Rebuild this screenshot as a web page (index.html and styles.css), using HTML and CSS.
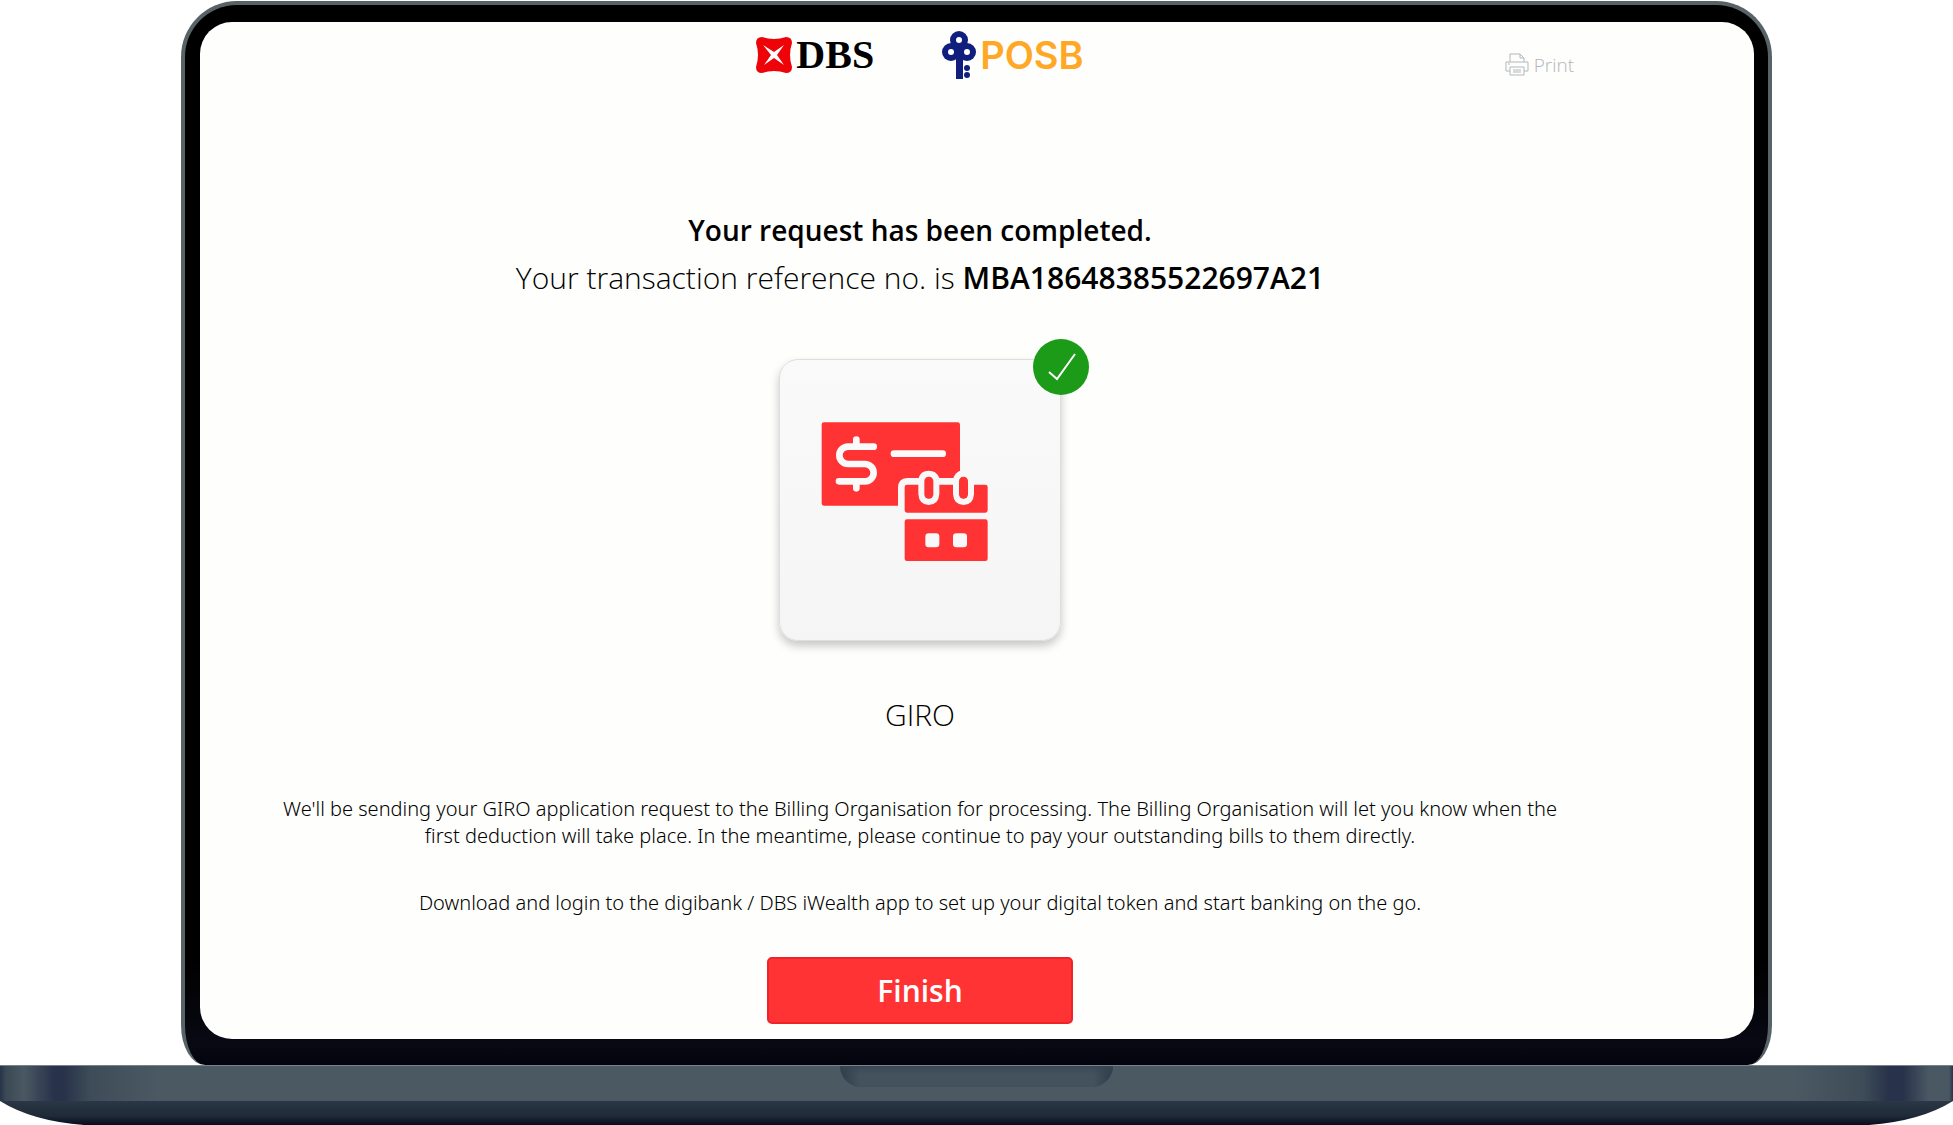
FILE: index.html
```html
<!DOCTYPE html>
<html lang="en">
<head>
<meta charset="utf-8">
<meta name="viewport" content="width=device-width, initial-scale=1">
<title>GIRO application completed</title>
<link rel="stylesheet" href="styles.css">
</head>
<body>
<div class="laptop">
  <div class="lid">
    <div class="screen">
      <header class="topbar">
        <div class="brands">
          <div class="brand">
            <svg class="dbs-mark" viewBox="0 0 36 36" aria-hidden="true">
              <path fill="#ee0308" d="M6 0Q18 4 30 0Q36 0 36 6Q32 18 36 30Q36 36 30 36Q18 32 6 36Q0 36 0 30Q4 18 0 6Q0 0 6 0Z"/>
              <path fill="#fff" d="M7 8L18 15L28 8L21 18L28 28L18 21L8 28L15 18Z"/>
            </svg>
            <span class="dbs-name">DBS</span>
          </div>
          <div class="brand">
            <svg class="posb-mark" viewBox="0 0 34 48" aria-hidden="true">
              <g fill="#101f7e">
                <circle cx="17" cy="9" r="9"/><circle cx="9" cy="21" r="9"/><circle cx="25" cy="21" r="9"/>
                <path d="M14 18h7v30h-7z"/><circle cx="25" cy="37" r="3"/><circle cx="25" cy="44" r="3"/>
              </g>
              <g fill="#fff"><circle cx="17" cy="9" r="3"/><circle cx="9" cy="21" r="3"/><circle cx="25" cy="21" r="3"/></g>
            </svg>
            <span class="posb-name">POSB</span>
          </div>
        </div>
        <a class="print" href="#print">
          <svg class="print-icon" viewBox="0 0 24 24" fill="none" stroke="currentColor" aria-hidden="true">
            <path d="M5 9V1h10l4 4v4M15 1v4h4M5 18H1V9h22v9h-4M5 14h14v8H5zM8 17h8M8 19h8M3 11h2"/>
          </svg>
          Print
        </a>
      </header>
      <main class="content">
        <h1 class="title">Your request has been completed.</h1>
        <p class="reference">Your transaction reference no. is <strong>MBA18648385522697A21</strong></p>
        <div class="tile">
          <svg class="giro-icon" viewBox="183 303 504 423" aria-hidden="true">
            <path fill="#f33" d="M192 307H593Q600 307 600 314V452Q586 458 580 474H538Q530 452 506 452Q482 452 476 474H441Q414 476 414 503V557H192Q185 557 185 550V314Q185 307 192 307Z"/>
            <path fill="#f33" d="M441 494H475V522Q477 554 506 555Q536 554 538 522V494H579V522Q581 554 611 555Q640 554 642 522V494H676Q683 494 683 501V571Q683 578 676 578H441Q434 578 434 571V501Q434 494 441 494Z"/>
            <rect x="493" y="470" width="27" height="66" rx="13" fill="#f33"/>
            <rect x="597" y="470" width="27" height="66" rx="13" fill="#f33"/>
            <rect x="434" y="598" width="249" height="125" rx="7" fill="#f33"/>
            <rect x="496" y="640" width="42" height="42" rx="10" fill="#f8f8f8"/>
            <rect x="579" y="640" width="42" height="42" rx="10" fill="#f8f8f8"/>
            <path fill="none" stroke="#fafafa" stroke-width="20" stroke-linecap="round" d="M402 401H548M341 380H264A26 26 0 0 0 264 432H315A26 26 0 0 1 315 484H237M289 359V375M289 489V505"/>
          </svg>
          <svg class="badge" viewBox="0 0 56 56" role="img" aria-label="Completed">
            <circle cx="28" cy="28" r="28" fill="#1b9b17"/>
            <path d="M16 33L24 40L42 15" fill="none" stroke="#fff" stroke-width="2"/>
          </svg>
        </div>
        <h2 class="service">GIRO</h2>
        <p class="note">We'll be sending your GIRO application request to the Billing Organisation for processing. The Billing Organisation will let you know when the first deduction will take place. In the meantime, please continue to pay your outstanding bills to them directly.</p>
        <p class="note">Download and login to the digibank / DBS iWealth app to set up your digital token and start banking on the go.</p>
        <button class="finish" type="button">Finish</button>
      </main>
    </div>
  </div>
  <div class="base">
    <div class="deck"><div class="notch"></div></div>
    <div class="foot">
      <svg class="corner" viewBox="0 0 84 24" aria-hidden="true"><path fill="#fff" d="M0 0Q32 20 84 24H0Z"/></svg>
      <svg class="corner" viewBox="0 0 84 24" aria-hidden="true"><path fill="#fff" d="M84 0Q52 20 0 24H84Z"/></svg>
    </div>
  </div>
</div>
</body>
</html>
```
FILE: styles.css
```css
* {
  box-sizing: border-box;
}

body {
  margin: 0;
  background: #fff;
  color: #000;
  font-family: "Open Sans", "Noto Sans", sans-serif;
  font-weight: 300;
}

h1, h2, p {
  margin: 0;
}

.laptop {
  display: flex;
  flex-direction: column;
  min-height: 100vh;
  padding-top: 1px;
}

.lid {
  flex: 1;
  display: flex;
  margin: 0 181px;
  padding: 17px 14px 26px 15px;
  border: 4px solid #576367;
  border-bottom: 0;
  border-radius: 56px 56px 24px 24px / 56px 56px 40px 40px;
  background: linear-gradient(#000 0, #000 90%, #080913 98%, #03030d 100%);
}

.screen {
  flex: 1;
  padding: 9px 114px 13px 0;
  border-radius: 32px;
  background: #fefefc;
}

.topbar {
  display: grid;
  grid-template-columns: 1fr auto 1fr;
  align-items: start;
}

.brands {
  grid-column: 2;
  display: flex;
  gap: 68px;
}

.brand {
  display: flex;
  align-items: center;
  height: 48px;
}

.dbs-mark {
  width: 36px;
  height: 36px;
  margin-right: 4px;
}

.dbs-name {
  color: #000;
  font: 700 40px/48px "Liberation Serif", serif;
}

.posb-mark {
  width: 34px;
  height: 48px;
  margin-right: 4px;
}

.posb-name {
  color: #ffa826;
  font: 600 38px/48px Inter, sans-serif;
}

.print {
  justify-self: end;
  display: flex;
  align-items: center;
  gap: 5px;
  margin: 20px 66px 0 0;
  color: #b4b6bc;
  font-size: 19px;
  line-height: 28px;
  text-decoration: none;
}

.print-icon {
  width: 24px;
  height: 24px;
}

.content {
  display: flex;
  flex-direction: column;
  align-items: center;
  padding: 128px 68px 0;
  text-align: center;
}

.title {
  font-size: 28px;
  font-weight: 600;
  line-height: 47px;
}

.reference {
  font-size: 30px;
  line-height: 47px;
}

.reference strong {
  font-weight: 600;
}

.tile {
  position: relative;
  width: 282px;
  height: 282px;
  margin-top: 58px;
  padding: 61px 41px;
  border: 1px solid #dedede;
  border-radius: 19px;
  background: linear-gradient(#fafafa, #f5f5f5);
  box-shadow: 0 5px 10px rgba(0, 0, 0, 0.22);
}

.giro-icon {
  display: block;
  width: 168px;
  height: 141px;
}

.badge {
  position: absolute;
  top: -21px;
  right: -29px;
  width: 56px;
  height: 56px;
}

.service {
  margin-top: 50px;
  font-size: 30px;
  font-weight: 300;
  line-height: 47px;
}

.note {
  max-width: 1290px;
  margin-top: 57px;
  font-family: "Noto Sans", "Open Sans", sans-serif;
  font-size: 20px;
  line-height: 27px;
}

.note + .note {
  margin-top: 40px;
}

.finish {
  width: 306px;
  height: 67px;
  margin-top: 41px;
  padding: 0;
  border: 2px solid #ee2428;
  border-radius: 5px;
  background: #f33;
  color: #fff;
  font: 600 30px/47px "Open Sans", "Noto Sans", sans-serif;
}

.base {
  background: #2a3443;
}

.deck {
  height: 36px;
  border-top: 1px solid #76838b;
  background: linear-gradient(90deg, #26334a 0, #3b4955 6px, #4a5863 24px, #28324a 54px, #28324a 64px, #3d4c58 90px, #4b5963 160px, #4b5963 calc(100% - 160px), #3d4c58 calc(100% - 90px), #28324a calc(100% - 64px), #28324a calc(100% - 50px), #4a5863 calc(100% - 24px), #4a5863 calc(100% - 4px), #26334a 100%);
}

.notch {
  width: 273px;
  height: 21px;
  margin: 0 auto;
  border-radius: 0 0 22px 22px;
  background: linear-gradient(90deg, #303c4b, #44525e 20px, #44525e calc(100% - 20px), #303c4b);
  box-shadow: inset 0 3px 5px #3a4653;
}

.foot {
  display: flex;
  justify-content: space-between;
  height: 24px;
  background: linear-gradient(#2b3646, #202b39 60%, #090b1b);
}

.corner {
  width: 84px;
  height: 24px;
}
```
